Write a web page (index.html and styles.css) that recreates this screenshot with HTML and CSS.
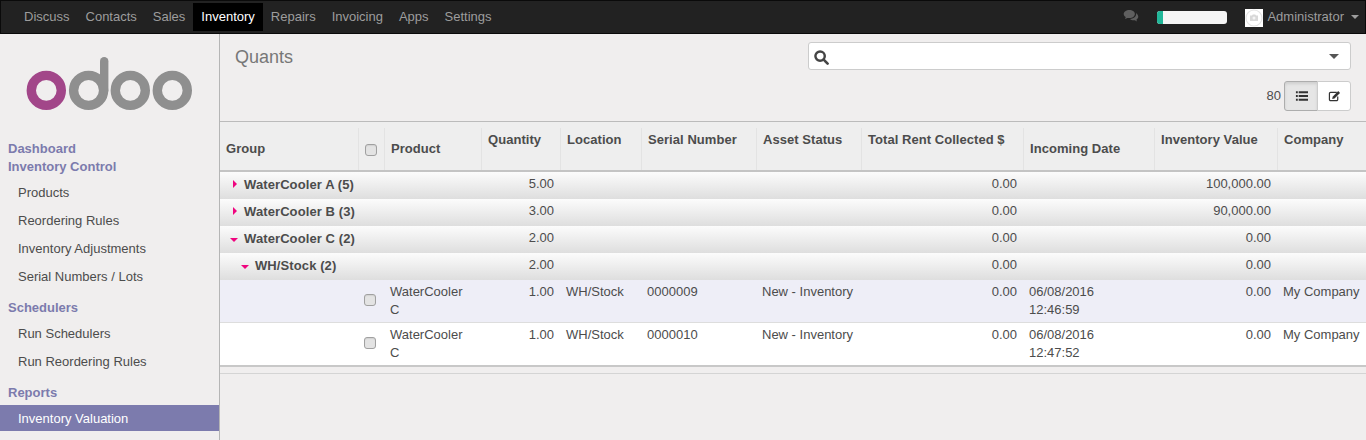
FILE: index.html
```html
<!DOCTYPE html>
<html lang="en">
<head>
<meta charset="utf-8">
<title>Quants</title>
<link rel="stylesheet" href="styles.css">
</head>
<body>
<nav class="topbar">
  <ul class="apps">
    <li>Discuss</li><li>Contacts</li><li>Sales</li><li class="active">Inventory</li><li>Repairs</li><li>Invoicing</li><li>Apps</li><li>Settings</li>
  </ul>
  <div class="top-right">
    <svg class="chat" width="16" height="12" viewBox="0 0 18 14"><path fill="#5f5f5f" d="M7 0C3.300 0 .5 2 .5 4.600c0 1.500.9 2.800 2.400 3.700L2 10.500l2.800-1.300c.7.100 1.400.2 2.200.2 3.700 0 6.500-2.100 6.500-4.800S10.700 0 7 0z"/><path fill="#5f5f5f" d="M14.700 3.500c.2.400.3.800.3 1.300 0 3.200-3.300 5.700-7.300 5.800 1 1 2.500 1.500 4.300 1.500.5 0 1 0 1.500-.1l2.400 1.300-.6-2c1.300-.8 2.200-2 2.200-3.300 0-1.900-1.100-3.500-2.800-4.500z"/></svg>
    <div class="progress"><span class="progress-fill"></span></div>
    <span class="avatar"><svg width="18" height="18" viewBox="0 0 18 18"><circle cx="9" cy="9" r="8" fill="none" stroke="#e4e4e4" stroke-width="1.200"/><path fill="#d8d8d8" d="M5 6.500h2l.8-1h2.400l.8 1h2v5.500H5z"/><circle cx="9" cy="9" r="1.500" fill="#f4f4f4"/></svg></span>
    <span class="user">Administrator</span><span class="caret"></span>
  </div>
</nav>
<div class="main">
  <aside class="sidebar">
    <div class="logo">
      <svg width="168" height="56" viewBox="0 0 168 56">
        <circle cx="20.300" cy="34.400" r="15" fill="none" stroke="#a24689" stroke-width="9.400"/>
        <circle cx="62.600" cy="34.400" r="15" fill="none" stroke="#8f8f8f" stroke-width="9.400"/>
        <path d="M78.200 34.400V5.200" stroke="#8f8f8f" stroke-width="8.400" stroke-linecap="round"/>
        <circle cx="104.300" cy="34.400" r="15" fill="none" stroke="#8f8f8f" stroke-width="9.400"/>
        <circle cx="146.300" cy="34.400" r="15" fill="none" stroke="#8f8f8f" stroke-width="9.400"/>
      </svg>
    </div>
    <div class="nav-head">Dashboard</div>
    <div class="nav-head">Inventory Control</div>
    <ul class="nav-list">
      <li>Products</li><li>Reordering Rules</li><li>Inventory Adjustments</li><li>Serial Numbers / Lots</li>
    </ul>
    <div class="nav-head section">Schedulers</div>
    <ul class="nav-list">
      <li>Run Schedulers</li><li>Run Reordering Rules</li>
    </ul>
    <div class="nav-head section">Reports</div>
    <ul class="nav-list">
      <li class="current">Inventory Valuation</li>
    </ul>
  </aside>
  <section class="content">
    <header class="control">
      <h1 class="title">Quants</h1>
      <div class="control-right">
        <div class="search">
          <svg width="15" height="15" viewBox="0 0 16 16"><circle cx="6.500" cy="6.500" r="5" fill="none" stroke="#444" stroke-width="2.600"/><path d="M10.300 10.300L14.500 14.500" stroke="#444" stroke-width="2.800" stroke-linecap="round"/></svg>
          <span class="search-caret"></span>
        </div>
        <div class="pager">
          <span class="count">80</span>
          <div class="switch">
            <span class="sw on"><svg width="13" height="12" viewBox="0 0 14 12"><path fill="#333" d="M1 1h2v2H1zM4 1h10v2H4zM1 5h2v2H1zM4 5h10v2H4zM1 9h2v2H1zM4 9h10v2H4z"/></svg></span>
            <span class="sw"><svg width="13" height="12" viewBox="0 0 14 13"><path fill="none" stroke="#333" stroke-width="1.300" d="M9.500 2.500H2.800A1.300 1.300 0 0 0 1.500 3.800v6.400a1.300 1.300 0 0 0 1.300 1.300h6.400a1.300 1.300 0 0 0 1.300-1.300V7"/><path fill="#333" d="M5 7.200L11 1.200l2 2-6 6-2.500.5z"/></svg></span>
          </div>
        </div>
      </div>
    </header>
    <table class="grid">
      <colgroup>
        <col class="c1"><col class="c2"><col class="c3"><col class="c4"><col class="c5"><col class="c6"><col class="c7"><col class="c8"><col class="c9"><col class="c10"><col class="c11">
      </colgroup>
      <thead>
        <tr>
          <th>Group</th><th class="ck"><span class="box"></span></th><th>Product</th><th class="top">Quantity</th><th class="top">Location</th><th class="top">Serial Number</th><th class="top">Asset Status</th><th class="top">Total Rent Collected $</th><th>Incoming Date</th><th class="top">Inventory Value</th><th class="top">Company</th>
        </tr>
      </thead>
      <tbody>
        <tr class="group"><td colspan="3"><span class="tri right"></span>WaterCooler A (5)</td><td class="num">5.00</td><td colspan="3"></td><td class="num">0.00</td><td></td><td class="num">100,000.00</td><td></td></tr>
        <tr class="group"><td colspan="3"><span class="tri right"></span>WaterCooler B (3)</td><td class="num">3.00</td><td colspan="3"></td><td class="num">0.00</td><td></td><td class="num">90,000.00</td><td></td></tr>
        <tr class="group"><td colspan="3"><span class="tri down"></span>WaterCooler C (2)</td><td class="num">2.00</td><td colspan="3"></td><td class="num">0.00</td><td></td><td class="num">0.00</td><td></td></tr>
        <tr class="group sub"><td colspan="3"><span class="tri down"></span>WH/Stock (2)</td><td class="num">2.00</td><td colspan="3"></td><td class="num">0.00</td><td></td><td class="num">0.00</td><td></td></tr>
        <tr class="data hl"><td></td><td class="ck"><span class="box"></span></td><td>WaterCooler C</td><td class="num">1.00</td><td>WH/Stock</td><td>0000009</td><td>New - Inventory</td><td class="num">0.00</td><td>06/08/2016 12:46:59</td><td class="num">0.00</td><td>My Company</td></tr>
        <tr class="data"><td></td><td class="ck"><span class="box"></span></td><td>WaterCooler C</td><td class="num">1.00</td><td>WH/Stock</td><td>0000010</td><td>New - Inventory</td><td class="num">0.00</td><td>06/08/2016 12:47:52</td><td class="num">0.00</td><td>My Company</td></tr>
      </tbody>
    </table>
    <div class="foot"></div>
  </section>
</div>
</body>
</html>
```
FILE: styles.css
```css
* { box-sizing: border-box; }
html, body { margin: 0; height: 100%; overflow: hidden; }
body { font: 13px/18px "Liberation Sans", Arial, sans-serif; color: #4c4c4c; background: #f0eeee; display: flex; flex-direction: column; }
ul { list-style: none; margin: 0; padding: 0; }

.topbar { height: 34px; flex: none; background: #222; border: 1px solid #0a0a0a; display: flex; justify-content: space-between; color: #9d9d9d; }
.apps { display: flex; padding: 2px 0 0 15px; }
.apps li { height: 28px; line-height: 28px; padding: 0 8px; }
.apps .active { background: #000; color: #fff; }
.top-right { display: flex; align-items: center; padding-right: 6px; }
.chat { margin: 0 18px 2px 0; }
.progress { width: 70px; height: 13px; border-radius: 3px; background: #f5f5f5; margin-right: 18px; overflow: hidden; }
.progress-fill { display: block; width: 6px; height: 100%; background: #21b799; }
.avatar { width: 18px; height: 18px; background: #fff; display: block; margin: 2px 4px 0 0; }
.avatar svg { display: block; }
.user { line-height: 18px; }
.caret { width: 0; height: 0; border: 4px solid transparent; border-top-color: #9d9d9d; border-bottom: 0; margin-left: 7px; }

.main { flex: 1; display: flex; min-height: 0; }
.sidebar { width: 220px; flex: none; border-right: 1px solid #b5b5b5; background: #f0eeee; }
.logo { height: 95px; padding: 22px 0 0 26px; margin-bottom: 11px; }
.logo svg { display: block; }
.nav-head { font-weight: bold; color: #7c7bad; padding-left: 8px; height: 18px; line-height: 18px; }
.nav-head.section { margin-top: 8px; }
.nav-list { margin-top: 3px; }
.nav-list li { height: 28px; line-height: 28px; padding-left: 18px; color: #4c4c4c; }
.nav-list .current { background: #7c7bad; color: #fff; height: 26px; }

.content { flex: 1; min-width: 0; }
.control { height: 87px; display: flex; justify-content: space-between; padding: 8px 15px 0; }
.title { margin: 0; font-size: 18px; font-weight: normal; color: #777; line-height: 30px; }
.control-right { width: 543px; }
.search { height: 28px; background: #fff; border: 1px solid #ccc; border-radius: 3px; display: flex; align-items: center; justify-content: space-between; padding: 0 11px 0 5px; }
.search svg { display: block; margin-top: 3px; }
.search-caret { width: 0; height: 0; border: 5px solid transparent; border-top-color: #555; border-bottom: 0; }
.pager { display: flex; justify-content: flex-end; align-items: center; margin-top: 11px; }
.count { margin-right: 3px; }
.switch { display: flex; }
.sw { width: 34px; height: 30px; background: #fff; border: 1px solid #ccc; display: flex; align-items: center; justify-content: center; border-radius: 0 3px 3px 0; margin-left: -1px; }
.sw.on { background: #e6e6e6; border-color: #adadad; border-radius: 3px 0 0 3px; box-shadow: inset 0 2px 3px rgba(0,0,0,.1); margin-left: 0; }

.grid { width: 1146px; table-layout: fixed; border-collapse: separate; border-spacing: 0; border-top: 1px solid #bbb; }
.c1 { width: 138px; } .c2 { width: 26px; } .c3 { width: 97px; } .c4 { width: 79px; } .c5 { width: 81px; } .c6 { width: 115px; } .c7 { width: 105px; } .c8 { width: 162px; } .c9 { width: 131px; } .c10 { width: 123px; } .c11 { width: 89px; }
th { height: 50px; padding: 6px 6px 0 7px; text-align: left; font-weight: bold; letter-spacing: .05px; background: #eee linear-gradient(#e3e3e3,#e3e3e3) no-repeat left 0 bottom 0 / 1px 42px; color: #4c4c4c; border-bottom: 2px solid #c4c4c4; vertical-align: middle; white-space: nowrap; }
th:first-child { background-image: none; padding-left: 6px; }
th.top { vertical-align: top; padding-top: 9px; }
th.ck { padding: 6px 0 0; text-align: center; }
td { padding: 0 6px; vertical-align: top; }
.box { display: inline-block; width: 12px; height: 12px; border: 1px solid #a0a0a0; border-radius: 3px; background: #e3e3e3; box-shadow: inset 0 1px 1px rgba(0,0,0,.08); vertical-align: middle; }
.num { text-align: right; }
.group td { height: 27px; padding-top: 3px; padding-bottom: 0; background: linear-gradient(#fcfcfc, #dedede); }
.group td:first-child { font-weight: bold; letter-spacing: .1px; padding-left: 24px; padding-top: 4px; }
.group.sub td:first-child { padding-left: 35px; }
.tri { display: inline-block; width: 0; height: 0; border-style: solid; border-color: transparent; vertical-align: 1px; }
.tri.right { border-width: 4px 0 4px 4px; border-left-color: #f0047f; margin: 0 7px 0 -11px; }
.tri.down { border-width: 4px 4px 0 4px; border-top-color: #f0047f; margin: 0 6px 0 -14px; }
.data td { height: 43px; padding-top: 3px; border-bottom: 1px solid #ddd; background: #fff; }
.data.hl td { background: #eeeef7; }
.data td.ck { text-align: center; padding: 10px 2px 0 0; }
.data td:nth-child(3) { padding-right: 14px; }
.foot { border-top: 2px solid #c8c8c8; border-bottom: 1px solid #d4d4d4; margin-top: -1px; box-sizing: content-box; height: 6px; }
```
